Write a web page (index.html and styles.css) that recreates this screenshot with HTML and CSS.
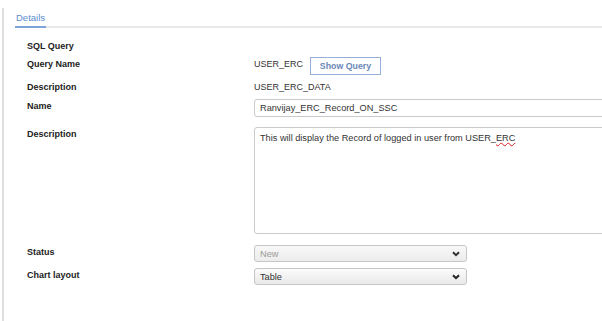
FILE: index.html
```html
<!DOCTYPE html>
<html lang="en">
<head>
    <meta charset="UTF-8">
    <title>Details</title>
    <link rel="stylesheet" href="styles.css">
</head>
<body>
    <div class="panel">
        <!-- Tabs -->
        <div class="tabs">
            <div class="tab active">Details</div>
        </div>

        <!-- Report form -->
        <div class="form">
            <div class="row row-sql">
                <div class="label">SQL Query</div>
            </div>
            <div class="row row-query">
                <div class="label">Query Name</div>
                <div class="value">
                    <span>USER_ERC</span>
                    <button class="btn">Show Query</button>
                </div>
            </div>
            <div class="row row-desc">
                <div class="label">Description</div>
                <div class="value">USER_ERC_DATA</div>
            </div>
            <div class="row row-name">
                <div class="label">Name</div>
                <div class="value">
                    <div class="input">Ranvijay_ERC_Record_ON_SSC</div>
                </div>
            </div>
            <div class="row row-text">
                <div class="label">Description</div>
                <div class="value">
                    <div class="input textarea">This will display the Record of logged in user from USER_<span class="spell">ERC</span></div>
                </div>
            </div>
            <div class="row row-status">
                <div class="label">Status</div>
                <div class="value">
                    <div class="select disabled">
                        <span>New</span>
                        <svg class="chevron" width="8" height="6" viewBox="0 0 8 6"><path d="M1 1.2 L4 4.2 L7 1.2" fill="none" stroke="#333" stroke-width="2"/></svg>
                    </div>
                </div>
            </div>
            <div class="row row-chart">
                <div class="label">Chart layout</div>
                <div class="value">
                    <div class="select">
                        <span>Table</span>
                        <svg class="chevron" width="8" height="6" viewBox="0 0 8 6"><path d="M1 1.2 L4 4.2 L7 1.2" fill="none" stroke="#222" stroke-width="2"/></svg>
                    </div>
                </div>
            </div>
        </div>
    </div>
</body>
</html>
```

FILE: styles.css
```css
/* General */
body {
    margin: 0;
    background: #ffffff;
    font-family: 'Liberation Sans', Arial, sans-serif;
    color: #333;
    overflow: hidden;
    height: 321px;
}

.panel {
    margin: 8px 0 0 2px;
    padding-left: 11px;
    border-left: 2px solid #dedede;
    height: 313px;
    overflow: hidden;
}

/* Tabs */
.tabs {
    display: flex;
    border-bottom: 2px solid #e8e8e8;
}

.tab {
    padding: 3px 1px 1px;
    margin-bottom: -2px;
    font-size: 9.5px;
    line-height: 14px;
    color: #5b8dd0;
    border-bottom: 2px solid #7ea3d8;
}

/* Form rows */
.form {
    padding-left: 12px;
}

.row {
    display: flex;
    align-items: flex-start;
    font-size: 9px;
    line-height: 14px;
}

.label {
    width: 227px;
    flex-shrink: 0;
    font-weight: bold;
    color: #222;
}

.value {
    display: flex;
    align-items: flex-start;
}

.row-sql { margin-top: 11px; }
.row-query { margin-top: 4px; }
.row-desc { margin-top: 5px; }
.row-name { margin-top: 5px; }
.row-text { margin-top: 10px; }
.row-status { margin-top: 11px; }
.row-chart { margin-top: 6px; }

/* Button */
.btn {
    margin-left: 7px;
    width: 71px;
    height: 18px;
    padding: 0;
    background: #fff;
    border: 1px solid #95afd8;
    font-family: inherit;
    font-size: 8.8px;
    font-weight: bold;
    color: #6b88b8;
}

/* Inputs */
.input {
    box-sizing: border-box;
    width: 380px;
    height: 18px;
    padding: 1px 5px;
    border: 1px solid #cacaca;
    border-radius: 3px;
    font-size: 9.2px;
    line-height: 14px;
    color: #333;
}

.textarea {
    height: 107px;
    padding: 3px 5px;
}

.spell {
    text-decoration: underline wavy #e02020;
    text-decoration-thickness: 1px;
}

/* Selects */
.select {
    box-sizing: border-box;
    display: flex;
    align-items: center;
    justify-content: space-between;
    width: 213px;
    height: 17px;
    padding: 0 6px 0 5px;
    border: 1px solid #c6c6c6;
    border-radius: 3px;
    background: linear-gradient(#fbfbfb, #e9e9e9);
    font-size: 9.2px;
    color: #333;
}

.select.disabled {
    color: #9a9a9a;
    background: linear-gradient(#f8f8f8, #ececec);
}

.chevron {
    display: block;
}
```
